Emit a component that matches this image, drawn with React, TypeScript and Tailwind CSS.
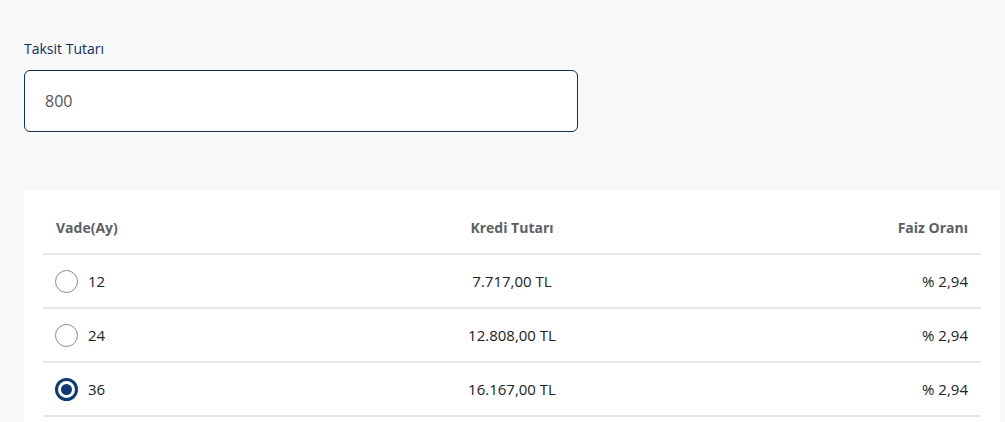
const rows = [
  { vade: "12", kredi: "7.717,00 TL", faiz: "% 2,94", selected: false },
  { vade: "24", kredi: "12.808,00 TL", faiz: "% 2,94", selected: false },
  { vade: "36", kredi: "16.167,00 TL", faiz: "% 2,94", selected: true },
];

function Radio({ checked }: { checked: boolean }) {
  if (checked) {
    return (
      <span className="flex h-[23px] w-[23px] items-center justify-center rounded-full border-[3px] border-[#0b3a78]">
        <span className="h-[11px] w-[11px] rounded-full bg-[#0b3a78]" />
      </span>
    );
  }
  return <span className="h-[23px] w-[23px] rounded-full border border-[#8a8a8a] bg-white" />;
}

export default function App() {
  return (
    <div className="min-h-[422px] bg-[#f8f8f8] pt-[39px] font-['Open_Sans',sans-serif]">
      <div className="px-6">
        <label className="block text-[14px] leading-[20px] text-[#0d2f5c]">Taksit Tutarı</label>
        <div className="mt-[11px] flex h-[62px] w-[554px] items-center rounded-md border border-[#0d2f5c] bg-white px-5">
          <span className="text-[16px] text-[#555]">800</span>
        </div>
      </div>

      <div className="ml-6 mr-[5px] mt-[58px] bg-white px-[19px] pb-4">
        <div className="grid h-[65px] grid-cols-3 items-end border-b-2 border-[#e6e6e6] px-[13px] pb-[15px] text-[14px] font-bold leading-[20px] text-[#5b5f66]">
          <span>Vade(Ay)</span>
          <span className="text-center">Kredi Tutarı</span>
          <span className="text-right">Faiz Oranı</span>
        </div>
        {rows.map((r) => (
          <div
            key={r.vade}
            className="grid h-[54px] grid-cols-3 items-center border-b-2 border-[#e6e6e6] px-3 text-[15px] text-[#222]"
          >
            <div className="flex items-center gap-[10px]">
              <Radio checked={r.selected} />
              <span>{r.vade}</span>
            </div>
            <span className="text-center">{r.kredi}</span>
            <span className="pr-px text-right">{r.faiz}</span>
          </div>
        ))}
      </div>
    </div>
  );
}
